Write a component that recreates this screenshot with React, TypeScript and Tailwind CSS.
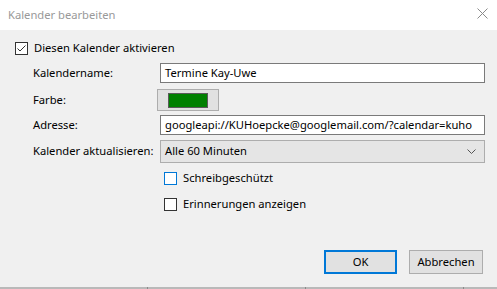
import React from 'react';

const font = { fontFamily: '"Noto Sans", "Open Sans", sans-serif' };

const CheckBox: React.FC<{ checked?: boolean; focused?: boolean }> = ({ checked, focused }) => (
  <div
    className={`w-[13px] h-[13px] border bg-white flex items-center justify-center ${
      focused ? 'border-[#0078d7]' : 'border-[#333333]'
    }`}
  >
    {checked && (
      <svg width="11" height="11" viewBox="0 0 11 11">
        <path d="M1.5 5.5 L4 8 L9.5 2.5" fill="none" stroke="#333" strokeWidth="1" />
      </svg>
    )}
  </div>
);

const Label: React.FC<{ children: React.ReactNode }> = ({ children }) => (
  <div className="w-[127px] shrink-0 whitespace-nowrap text-[11.2px] text-black">{children}</div>
);

export default function App() {
  return (
    <div className="w-[497px] h-[289px] flex flex-col bg-[#f0f0f0] overflow-hidden" style={font}>
      <div className="h-[30px] bg-white flex items-center justify-between pl-[8px] pr-[8px]">
        <span className="text-[11.2px] text-[#999999]">Kalender bearbeiten</span>
        <svg width="11" height="11" viewBox="0 0 11 11" className="mr-[1px] -mt-[4px]">
          <path d="M0.5 0.5 L10.5 10.5 M10.5 0.5 L0.5 10.5" stroke="#8a8a8a" strokeWidth="1" />
        </svg>
      </div>

      <div className="flex-1 flex flex-col">
        <div className="flex items-center gap-[6px] pl-[15px] mt-[12px] h-[13px]">
          <CheckBox checked />
          <span className="text-[11.2px] text-black">Diesen Kalender aktivieren</span>
        </div>

        <div className="flex items-center pl-[33px] mt-[8px] h-[20px]">
          <Label>Kalendername:</Label>
          <div className="w-[325px] h-[20px] bg-white border border-[#7a7a7a] flex items-center pl-[4px] text-[11.2px] text-black">
            Termine Kay-Uwe
          </div>
        </div>

        <div className="flex items-center pl-[33px] mt-[6px] h-[22px]">
          <Label>Farbe:</Label>
          <div className="-ml-[3px] w-[62px] h-[22px] bg-[#e1e1e1] border border-[#adadad] flex items-center justify-center">
            <div className="w-[40px] h-[15px] bg-[#008000] border border-[#5a5a5a]" />
          </div>
        </div>

        <div className="flex items-center pl-[33px] mt-[4px] h-[20px]">
          <Label>Adresse:</Label>
          <div className="w-[325px] h-[20px] bg-white border border-[#7a7a7a] flex items-center pl-[4px] text-[11.2px] text-black whitespace-nowrap overflow-hidden">
            googleapi://KUHoepcke@googlemail.com/?calendar=kuho
          </div>
        </div>

        <div className="flex items-center pl-[33px] mt-[5px] h-[23px]">
          <Label>Kalender aktualisieren:</Label>
          <div className="w-[325px] h-[23px] bg-[#e5e5e5] border border-[#adadad] flex items-center justify-between pl-[4px] pr-[8px] text-[11.2px] text-black">
            <span>Alle 60 Minuten</span>
            <svg width="9" height="6" viewBox="0 0 9 6">
              <path d="M0.5 0.5 L4.5 4.5 L8.5 0.5" fill="none" stroke="#555" strokeWidth="1" />
            </svg>
          </div>
        </div>

        <div className="flex items-center gap-[6px] pl-[164px] mt-[9px] h-[13px]">
          <CheckBox focused />
          <span className="text-[11.2px] text-black">Schreibgeschützt</span>
        </div>

        <div className="flex items-center gap-[6px] pl-[164px] mt-[13px] h-[13px]">
          <CheckBox />
          <span className="text-[11.2px] text-black">Erinnerungen anzeigen</span>
        </div>

        <div className="flex justify-end gap-[12px] pr-[14px] mt-[39px]">
          <button className="w-[73px] h-[24px] bg-[#e1e1e1] border-2 border-[#0078d7] text-[11.2px] text-black">
            OK
          </button>
          <button className="w-[74px] h-[24px] bg-[#e1e1e1] border border-[#adadad] text-[11.2px] text-black">
            Abbrechen
          </button>
        </div>
      </div>

      <div className="h-[2px] flex bg-[#b9b9b9]">
        <div className="w-[147px]" />
        <div className="w-[158px] border-l border-[#8a8a8a]" />
        <div className="w-[158px] border-l border-[#8a8a8a]" />
        <div className="flex-1 border-l border-[#8a8a8a]" />
      </div>
    </div>
  );
}
